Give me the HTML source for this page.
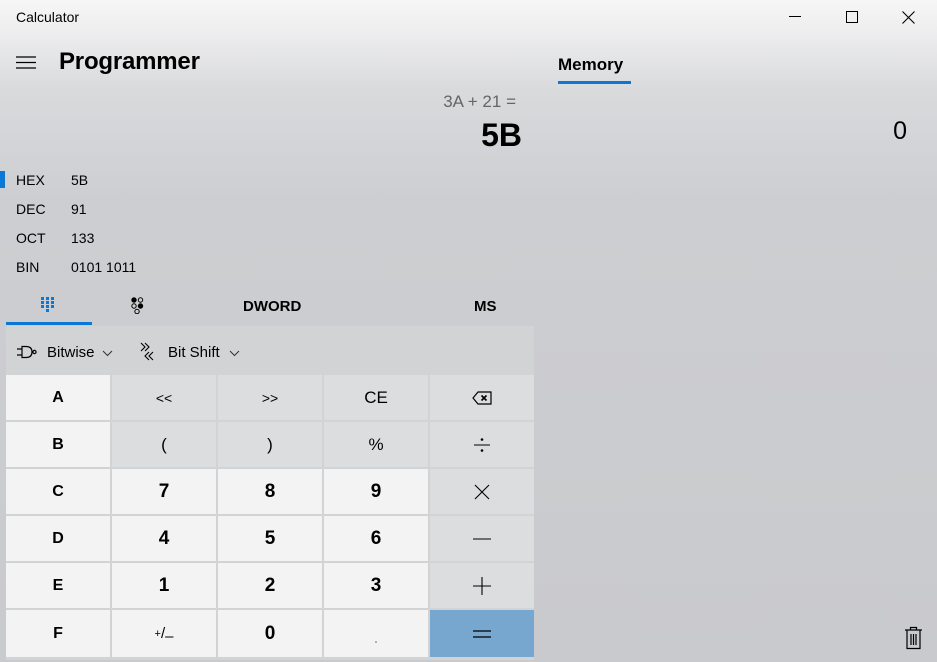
<!DOCTYPE html>
<html><head><meta charset="utf-8"><style>
*{margin:0;padding:0;box-sizing:border-box}
body{width:937px;height:662px;overflow:hidden;font-family:"Liberation Sans",sans-serif;color:#000;
background:linear-gradient(180deg,#f6f6f6 0px,#eeeeef 30px,#d9dadc 90px,#cdced1 200px,#c9cacd 662px);position:relative}
.a{position:absolute}
.b{position:absolute;display:flex;align-items:center;justify-content:center;font-size:17px;width:104px;height:45px}
.n{background:#f3f3f3;font-weight:600;font-size:19px}
.o{background:#dcdddf}
</style></head><body>
<div class="a" style="left:16px;top:9px;font-size:14px">Calculator</div>
<div class="a" style="left:789px;top:16px;width:12px;height:1px;background:#000"></div>
<div class="a" style="left:846px;top:11px;width:12px;height:12px;border:1px solid #000"></div>
<svg class="a" style="left:902px;top:11px" width="13" height="13"><path d="M0.5 0.5L12.5 12.5M12.5 0.5L0.5 12.5" stroke="#000" stroke-width="1.1"/></svg>
<svg class="a" style="left:16px;top:56px" width="20" height="13"><path d="M0 1H20M0 6.5H20M0 12H20" stroke="#000" stroke-width="1.2"/></svg>
<div class="a" style="left:59px;top:48px;font-size:24px;font-weight:bold;letter-spacing:-0.2px">Programmer</div>
<div class="a" style="left:558px;top:55px;font-size:17px;font-weight:bold">Memory</div>
<div class="a" style="left:558px;top:81px;width:73px;height:3px;background:#0b78d6"></div>
<div class="a" style="right:421px;top:92px;font-size:17px;color:#666">3A + 21 =</div>
<div class="a" style="right:415px;top:117px;font-size:32px;font-weight:bold">5B</div>
<div class="a" style="right:30px;top:117px;font-size:25px">0</div>
<div class="a" style="left:0;top:171px;width:5px;height:17px;background:#0b78d6"></div>
<div class="a" style="left:16px;top:166px;font-size:14px;line-height:29px">HEX<br>DEC<br>OCT<br>BIN</div>
<div class="a" style="left:71px;top:166px;font-size:14px;line-height:29px">5B<br>91<br>133<br>0101 1011</div>
<svg class="a" style="left:41px;top:297px" width="16" height="17" fill="#0b78d6"><rect x="0" y="0" width="3" height="3"/><rect x="5" y="0" width="3" height="3"/><rect x="10" y="0" width="3" height="3"/><rect x="0" y="4" width="3" height="3"/><rect x="5" y="4" width="3" height="3"/><rect x="10" y="4" width="3" height="3"/><rect x="0" y="8" width="3" height="3"/><rect x="5" y="8" width="3" height="3"/><rect x="10" y="8" width="3" height="3"/><rect x="5" y="12" width="3" height="3"/></svg>
<svg class="a" style="left:131px;top:297px" width="14" height="17" fill="none" stroke="#000" stroke-width="1"><circle cx="3" cy="3" r="2.2" fill="#000"/><circle cx="9.5" cy="3" r="2.2"/><circle cx="3" cy="9" r="2.2"/><circle cx="9.5" cy="9" r="2.2" fill="#000"/><circle cx="6" cy="14.5" r="2.2"/></svg>
<div class="a" style="left:6px;top:322px;width:86px;height:3px;background:#0b78d6"></div>
<div class="a" style="left:243px;top:298px;font-size:15px;font-weight:bold">DWORD</div>
<div class="a" style="left:474px;top:298px;font-size:15px;font-weight:bold">MS</div>
<div class="a" style="left:6px;top:326px;width:528px;height:334px;background:#d2d3d5"></div>
<svg class="a" style="left:16px;top:345px" width="22" height="14" fill="none" stroke="#000" stroke-width="1.2"><path d="M1 4H6M1 10H6M6 1.5H10Q16 1.5 16 7Q16 12.5 10 12.5H6Z"/><circle cx="18.5" cy="7" r="1.6"/></svg>
<div class="a" style="left:47px;top:344px;font-size:15px">Bitwise</div>
<svg class="a" style="left:102px;top:350px" width="11" height="7"><path d="M1 1L5.5 5.5L10 1" stroke="#333" fill="none"/></svg>
<svg class="a" style="left:138px;top:342px" width="20" height="20" fill="none" stroke="#000" stroke-width="1.1"><path d="M3 1L7 5L3 9M7 1L11 5L7 9M11 10L7 14L11 18M15 10L11 14L15 18"/></svg>
<div class="a" style="left:168px;top:344px;font-size:15px">Bit Shift</div>
<svg class="a" style="left:229px;top:350px" width="11" height="7"><path d="M1 1L5.5 5.5L10 1" stroke="#333" fill="none"/></svg>

<div class="b" style="left:6px;top:375px;background:#f3f3f3;font-size:16px;font-weight:600">A</div>
<div class="b o" style="left:112px;top:375px;font-size:14px">&lt;&lt;</div>
<div class="b o" style="left:218px;top:375px;font-size:14px">&gt;&gt;</div>
<div class="b o" style="left:324px;top:375px">CE</div>
<div class="b o" style="left:430px;top:375px"><svg width="20" height="14" fill="none" stroke="#000" stroke-width="1.2"><path d="M6 1H19V13H6L1 7Z"/><path d="M9.5 4.5L14.5 9.5M14.5 4.5L9.5 9.5" stroke-width="1.6"/></svg></div>

<div class="b" style="left:6px;top:422px;background:#f3f3f3;font-size:16px;font-weight:600">B</div>
<div class="b o" style="left:112px;top:422px">(</div>
<div class="b o" style="left:218px;top:422px">)</div>
<div class="b o" style="left:324px;top:422px">%</div>
<div class="b o" style="left:430px;top:422px"><svg width="18" height="16"><path d="M1 8H17" stroke="#000"/><circle cx="9" cy="2.5" r="1.3"/><circle cx="9" cy="13.5" r="1.3"/></svg></div>

<div class="b" style="left:6px;top:469px;background:#f3f3f3;font-size:16px;font-weight:600">C</div>
<div class="b n" style="left:112px;top:469px">7</div>
<div class="b n" style="left:218px;top:469px">8</div>
<div class="b n" style="left:324px;top:469px">9</div>
<div class="b o" style="left:430px;top:469px"><svg width="16" height="16"><path d="M1 1L15 15M15 1L1 15" stroke="#000" stroke-width="1.1"/></svg></div>

<div class="b" style="left:6px;top:516px;background:#f3f3f3;font-size:16px;font-weight:600">D</div>
<div class="b n" style="left:112px;top:516px">4</div>
<div class="b n" style="left:218px;top:516px">5</div>
<div class="b n" style="left:324px;top:516px">6</div>
<div class="b o" style="left:430px;top:516px"><svg width="18" height="4"><path d="M0 2H18" stroke="#000" stroke-width="1.1"/></svg></div>

<div class="b" style="left:6px;top:563px;background:#f3f3f3;font-size:16px;font-weight:600">E</div>
<div class="b n" style="left:112px;top:563px">1</div>
<div class="b n" style="left:218px;top:563px">2</div>
<div class="b n" style="left:324px;top:563px">3</div>
<div class="b o" style="left:430px;top:563px"><svg width="18" height="18"><path d="M0 9H18M9 0V18" stroke="#000" stroke-width="1.1"/></svg></div>

<div class="b" style="left:6px;top:610px;height:47px;background:#f3f3f3;font-size:16px;font-weight:600">F</div>
<div class="b" style="left:112px;top:610px;height:47px;background:#f3f3f3;font-size:15px"><sup style="font-size:11px">+</sup>/<span style="position:relative;top:3px">–</span></div>
<div class="b n" style="left:218px;top:610px;height:47px">0</div>
<div class="b" style="left:324px;top:610px;height:47px;background:#f3f3f3;color:#999;padding-top:8px">.</div>
<div class="b" style="left:430px;top:610px;height:47px;background:#77a7cf"><svg width="18" height="10"><path d="M0 2H18M0 8H18" stroke="#000" stroke-width="1.3"/></svg></div>

<svg class="a" style="left:904px;top:626px" width="19" height="24" fill="none" stroke="#000" stroke-width="1.2"><path d="M1 4H18M6.5 4V1.5H12.5V4M3 4V22.5H16V4M7 8V19M9.5 8V19M12 8V19"/></svg>
</body></html>
